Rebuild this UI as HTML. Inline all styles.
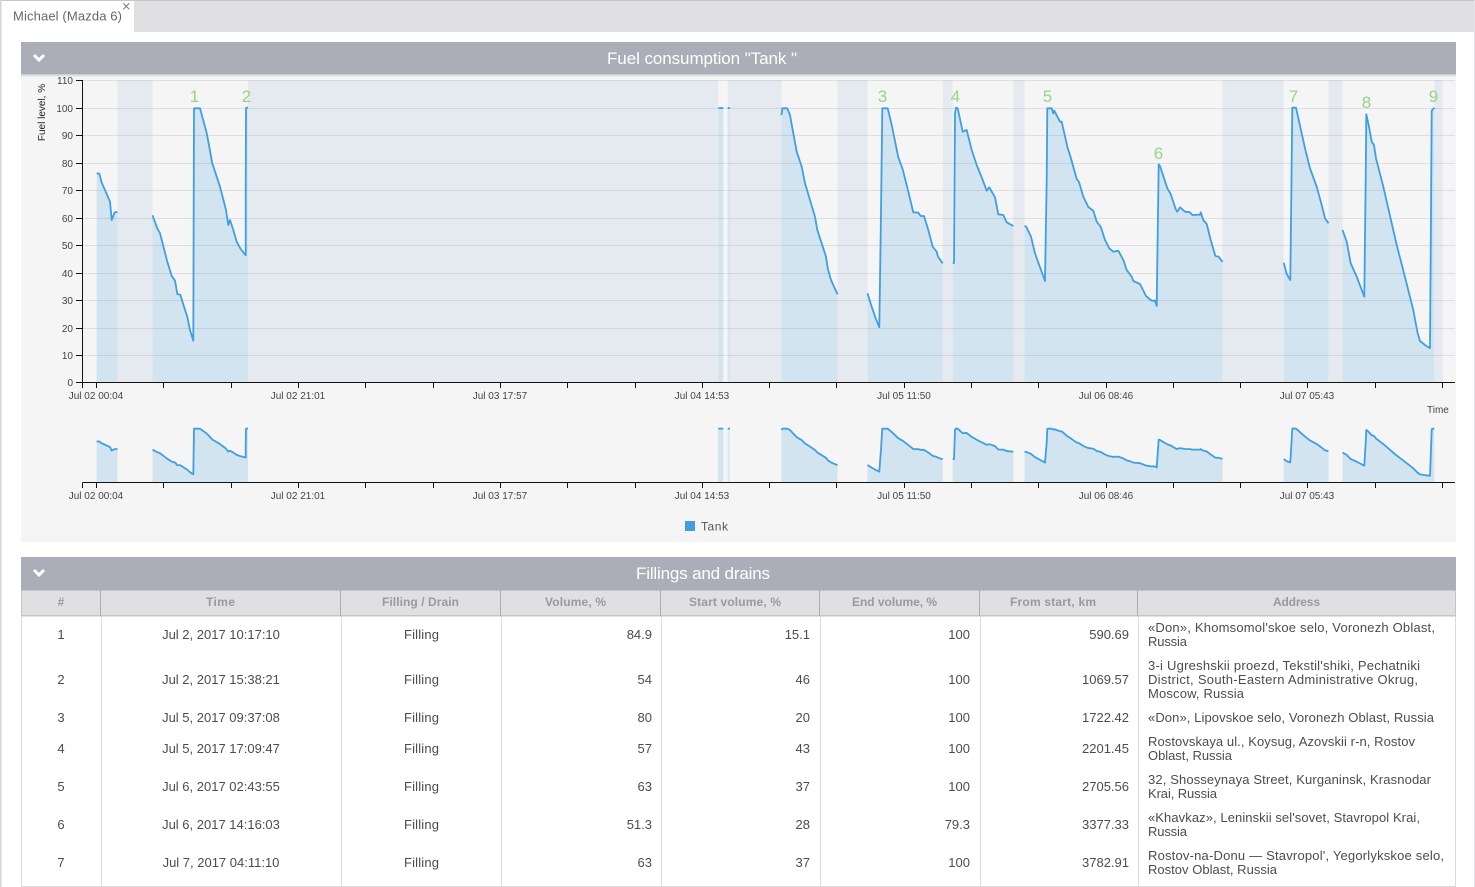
<!DOCTYPE html>
<html><head><meta charset="utf-8"><title>Fuel consumption</title>
<style>
html,body{margin:0;padding:0;background:#fff;width:1475px;height:887px;overflow:hidden}
svg{display:block}
text{font-family:"Liberation Sans",sans-serif}
.tk{font-size:10px;fill:#444;text-anchor:middle}
.yl{font-size:10px;fill:#444;text-anchor:end}
.num{font-size:17px;fill:#95d585;text-anchor:middle}
.th{font-size:12px;font-weight:bold;fill:#979aa3;text-anchor:middle}
.td{font-size:13px;fill:#4c4c4c}
.c{text-anchor:middle}.r{text-anchor:end}
.ttl{font-size:17px;fill:#fff;text-anchor:middle}
.ln{fill:none;stroke:#3f9fe0;stroke-width:1.8;stroke-linejoin:round;vector-effect:non-scaling-stroke}
</style></head><body>
<svg width="1475" height="887" viewBox="0 0 1475 887" xmlns="http://www.w3.org/2000/svg">
<defs>
<linearGradient id="sh" x1="0" y1="0" x2="0" y2="1"><stop offset="0" stop-color="#c4c6cc"/><stop offset="1" stop-color="#f5f5f5"/></linearGradient>
<g id="areas" fill="#d2e4f0">
<polygon points="96.7,173.3 99.3,173.7 101.7,182.7 105,190 110,201.7 111.7,220 114.7,212.3 117.5,212 117.5,382 96.7,382"/>
<polygon points="152.5,215.3 157.3,228.3 160,233.3 167.3,261.7 171.7,276 175,280.7 177.3,294 180.3,294.7 184,306.7 187.3,316.7 190,330 193.3,340.7 194,108.3 200,108.3 206.7,133 212.3,163.3 220,186.7 226,210 228.3,225 230,220 233.3,230 236.7,241.7 240.7,249 245.7,255.3 245.7,200 246,108 248,107.5 248,382 152.5,382"/>
<rect x="718.3" y="108" width="5" height="274"/>
<rect x="727.7" y="108" width="2.3" height="274" opacity=".7"/>
<polygon points="781.5,115 782.3,108.3 787.3,108.3 790,115 793.3,133.3 796.7,151.7 801.7,166.7 805,183.3 810,200 815,216.7 817.3,230 821.7,243.3 826,256.7 827.7,268.3 831,280 837.5,294.3 837.5,382 781.5,382"/>
<polygon points="867.5,293.3 871.7,306.7 875.7,318.3 879.3,327.3 881,213 882.3,108.3 887.7,108.3 891.7,125 898.3,157.3 902.7,169.3 908.3,191.7 913.3,212.3 918.3,212.7 920.7,216 924,216 928.3,230 932.7,246.7 936.7,251.7 938,256.7 942.7,263.3 942.7,382 867.5,382"/>
<polygon points="952.7,263.3 954,263 955,113.3 956,107.7 957.7,108.3 962.7,131.7 966.7,130 971.7,150 976.7,165 982.7,180 986.7,190.7 989.3,187.3 995,197.3 998.3,214.3 1003.3,215 1006.7,222.3 1013.3,226 1013.3,382 952.7,382"/>
<polygon points="1024.5,226 1026.3,226.7 1031,236.7 1035,253.3 1045,281 1046.7,180 1047.3,108.3 1051.7,108.3 1053.3,113.3 1054.3,110.7 1060,121.7 1061.7,121.7 1067.7,148.3 1070,155 1076.7,179 1079,182 1083.3,196.7 1088.3,207 1093.3,210.7 1096.7,221.7 1100.7,226.7 1105,240 1109.3,248.3 1113.3,251.7 1118.3,250.7 1123.3,260 1126.7,270 1131.7,276.7 1133.3,281 1140,284 1146,296 1151.7,300.7 1155,300.7 1156.7,306 1158,213.3 1158.7,164.3 1160,166 1167.3,188.3 1170.7,194 1175.7,209.3 1177.3,211.7 1180,207.3 1185,211.7 1190,212.3 1192.3,215 1200,214.7 1200.7,212.3 1203.3,220 1206.7,224 1210.7,240 1215.3,255.7 1218.7,256.7 1222.5,262 1222.5,382 1024.5,382"/>
<polygon points="1283.7,262.7 1286.7,274 1290.3,280 1291.3,196.7 1292.3,107.7 1296,107.7 1305,148.3 1310,168.3 1316.7,186.7 1321.7,205 1325,218.3 1328.5,223.3 1328.5,382 1283.7,382"/>
<polygon points="1342.5,230 1346.7,241.7 1350.7,263.3 1356.7,276.7 1364.3,296.7 1365.7,180 1366.3,114.3 1369,126.7 1371.7,141.7 1374,145 1376,158.3 1383.3,186.7 1396.7,245 1404,273.3 1413.3,310 1417.3,331.7 1420,341 1425,345 1430,348.3 1431,213 1431.7,110.7 1434.3,107.7 1434.3,382 1342.5,382"/>
</g>
<g id="lines" class="ln">
<polyline class="ln" points="96.7,173.3 99.3,173.7 101.7,182.7 105,190 110,201.7 111.7,220 114.7,212.3 117.5,212"/>
<polyline class="ln" points="152.5,215.3 157.3,228.3 160,233.3 167.3,261.7 171.7,276 175,280.7 177.3,294 180.3,294.7 184,306.7 187.3,316.7 190,330 193.3,340.7 194,108.3 200,108.3 206.7,133 212.3,163.3 220,186.7 226,210 228.3,225 230,220 233.3,230 236.7,241.7 240.7,249 245.7,255.3 245.7,200 246,108 248,107.5"/>
<polyline class="ln" points="718.3,108 723.3,108"/>
<polyline class="ln" points="727.7,108 730,108"/>
<polyline class="ln" points="781.5,115 782.3,108.3 787.3,108.3 790,115 793.3,133.3 796.7,151.7 801.7,166.7 805,183.3 810,200 815,216.7 817.3,230 821.7,243.3 826,256.7 827.7,268.3 831,280 837.5,294.3"/>
<polyline class="ln" points="867.5,293.3 871.7,306.7 875.7,318.3 879.3,327.3 881,213 882.3,108.3 887.7,108.3 891.7,125 898.3,157.3 902.7,169.3 908.3,191.7 913.3,212.3 918.3,212.7 920.7,216 924,216 928.3,230 932.7,246.7 936.7,251.7 938,256.7 942.7,263.3"/>
<polyline class="ln" points="952.7,263.3 954,263 955,113.3 956,107.7 957.7,108.3 962.7,131.7 966.7,130 971.7,150 976.7,165 982.7,180 986.7,190.7 989.3,187.3 995,197.3 998.3,214.3 1003.3,215 1006.7,222.3 1013.3,226"/>
<polyline class="ln" points="1024.5,226 1026.3,226.7 1031,236.7 1035,253.3 1045,281 1046.7,180 1047.3,108.3 1051.7,108.3 1053.3,113.3 1054.3,110.7 1060,121.7 1061.7,121.7 1067.7,148.3 1070,155 1076.7,179 1079,182 1083.3,196.7 1088.3,207 1093.3,210.7 1096.7,221.7 1100.7,226.7 1105,240 1109.3,248.3 1113.3,251.7 1118.3,250.7 1123.3,260 1126.7,270 1131.7,276.7 1133.3,281 1140,284 1146,296 1151.7,300.7 1155,300.7 1156.7,306 1158,213.3 1158.7,164.3 1160,166 1167.3,188.3 1170.7,194 1175.7,209.3 1177.3,211.7 1180,207.3 1185,211.7 1190,212.3 1192.3,215 1200,214.7 1200.7,212.3 1203.3,220 1206.7,224 1210.7,240 1215.3,255.7 1218.7,256.7 1222.5,262"/>
<polyline class="ln" points="1283.7,262.7 1286.7,274 1290.3,280 1291.3,196.7 1292.3,107.7 1296,107.7 1305,148.3 1310,168.3 1316.7,186.7 1321.7,205 1325,218.3 1328.5,223.3"/>
<polyline class="ln" points="1342.5,230 1346.7,241.7 1350.7,263.3 1356.7,276.7 1364.3,296.7 1365.7,180 1366.3,114.3 1369,126.7 1371.7,141.7 1374,145 1376,158.3 1383.3,186.7 1396.7,245 1404,273.3 1413.3,310 1417.3,331.7 1420,341 1425,345 1430,348.3 1431,213 1431.7,110.7 1434.3,107.7"/>
</g>
</defs>

<!-- page chrome -->
<rect width="1475" height="887" fill="#fff"/>
<rect x="134" y="0" width="1341" height="32" fill="#e0e0e2"/>
<rect x="0" y="0" width="1475" height="1" fill="#c6c6c8"/>
<rect x="0" y="0" width="1.5" height="887" fill="#d4d4d6"/>
<rect x="1474" y="0" width="1" height="887" fill="#e4e4e6"/>
<text x="13" y="20.5" font-size="13" fill="#666" textLength="109" lengthAdjust="spacing">Michael (Mazda 6)</text>
<path d="M123.3 3.3l6 6M129.3 3.3l-6 6" stroke="#777" stroke-width="1" fill="none"/>

<!-- chart panel -->
<rect x="21" y="42" width="1435" height="500" fill="#f5f5f5"/>
<rect x="21" y="42" width="1435" height="32" fill="#abaeb8"/>
<rect x="21" y="74" width="1435" height="3" fill="url(#sh)"/>
<polyline points="34,55 39,60 44,55" fill="none" stroke="#fff" stroke-width="3"/>
<text class="ttl" x="702" y="64" textLength="190" lengthAdjust="spacing">Fuel consumption "Tank "</text>

<!-- bands -->
<g fill="#e5eaf1">
<rect x="117.5" y="80" width="35" height="302"/>
<rect x="248" y="80" width="470.3" height="302"/>
<rect x="727.7" y="80" width="54" height="302"/>
<rect x="837.5" y="80" width="30" height="302"/>
<rect x="942.7" y="80" width="10" height="302"/>
<rect x="1013.3" y="80" width="11.2" height="302"/>
<rect x="1222.5" y="80" width="61.2" height="302"/>
<rect x="1328.5" y="80" width="14" height="302"/>
<rect x="1434.3" y="80" width="8.4" height="302"/>
</g>
<use href="#areas"/>
<!-- grid -->
<g stroke="#000" stroke-opacity=".085" stroke-width="1">
<path d="M83 80.5H1455M83 108.5H1455M83 135.5H1455M83 163.5H1455M83 190.5H1455M83 218.5H1455M83 245.5H1455M83 273.5H1455M83 300.5H1455M83 328.5H1455M83 355.5H1455"/>
</g>
<use href="#lines"/>

<!-- axes -->
<g stroke="#111" stroke-width="1" fill="none">
<path d="M82.5 80V388M76 80.5H82.5M76 108.5H82.5M76 135.5H82.5M76 163.5H82.5M76 190.5H82.5M76 218.5H82.5M76 245.5H82.5M76 273.5H82.5M76 300.5H82.5M76 328.5H82.5M76 355.5H82.5M76 382.5H1455"/>
<path id="tk" d="M96.5 382V388M163.5 382V388M231.5 382V388M298.5 382V388M365.5 382V388M433.5 382V388M500.5 382V388M567.5 382V388M635.5 382V388M702.5 382V388M769.5 382V388M836.5 382V388M904.5 382V388M971.5 382V388M1038.5 382V388M1106.5 382V388M1173.5 382V388M1240.5 382V388M1307.5 382V388M1375.5 382V388M1442.5 382V388"/>
</g>
<g class="yl-g">
<text class="yl" x="73" y="84">110</text><text class="yl" x="73" y="112">100</text><text class="yl" x="73" y="139">90</text><text class="yl" x="73" y="167">80</text><text class="yl" x="73" y="194">70</text><text class="yl" x="73" y="222">60</text><text class="yl" x="73" y="249">50</text><text class="yl" x="73" y="277">40</text><text class="yl" x="73" y="304">30</text><text class="yl" x="73" y="332">20</text><text class="yl" x="73" y="359">10</text><text class="yl" x="73" y="386">0</text>
</g>
<text transform="translate(45,112.5) rotate(-90)" font-size="10" fill="#222" text-anchor="middle">Fuel level, %</text>
<g>
<text class="tk" x="96" y="399">Jul 02 00:04</text><text class="tk" x="298" y="399">Jul 02 21:01</text><text class="tk" x="500" y="399">Jul 03 17:57</text><text class="tk" x="702" y="399">Jul 04 14:53</text><text class="tk" x="904" y="399">Jul 05 11:50</text><text class="tk" x="1106" y="399">Jul 06 08:46</text><text class="tk" x="1307" y="399">Jul 07 05:43</text>
</g>
<text x="1427" y="413" font-size="10" fill="#444">Time</text>
<g>
<text class="num" x="194.5" y="102">1</text><text class="num" x="246.5" y="102">2</text><text class="num" x="882.5" y="102">3</text><text class="num" x="955.5" y="102">4</text><text class="num" x="1047.5" y="102">5</text><text class="num" x="1158.5" y="159">6</text><text class="num" x="1293.5" y="102">7</text><text class="num" x="1366.5" y="108">8</text><text class="num" x="1433.5" y="102">9</text>
</g>

<!-- overview chart -->
<g transform="translate(0,407.4) scale(1,0.1964)">
<use href="#areas"/>
<use href="#lines"/>
</g>
<g stroke="#111" stroke-width="1" fill="none">
<path d="M82.5 482.5V488M82.5 482.5H1455"/>
<use href="#tk" y="100"/>
</g>
<g>
<text class="tk" x="96" y="499">Jul 02 00:04</text><text class="tk" x="298" y="499">Jul 02 21:01</text><text class="tk" x="500" y="499">Jul 03 17:57</text><text class="tk" x="702" y="499">Jul 04 14:53</text><text class="tk" x="904" y="499">Jul 05 11:50</text><text class="tk" x="1106" y="499">Jul 06 08:46</text><text class="tk" x="1307" y="499">Jul 07 05:43</text>
</g>
<rect x="685" y="521" width="10" height="10" fill="#3f9fe0"/>
<text x="701" y="530.5" font-size="12" fill="#555" textLength="27" lengthAdjust="spacing">Tank</text>

<!-- table panel -->
<rect x="21" y="557" width="1435" height="33" fill="#abaeb8"/>
<polyline points="34,570 39,575 44,570" fill="none" stroke="#fff" stroke-width="3"/>
<text class="ttl" x="703" y="579" textLength="134" lengthAdjust="spacing">Fillings and drains</text>
<rect x="21" y="590" width="1435" height="26" fill="#e0e0e3"/>
<rect x="21" y="590" width="1435" height="1" fill="#c3c5cc"/>
<rect x="21" y="615" width="1435" height="1.5" fill="#c3c5cd"/>
<path d="M100.5 590V616M340.5 590V616M500.5 590V616M660.5 590V616M819.5 590V616M979.5 590V616M1137.5 590V616" stroke="#a9acb8" fill="none"/>
<path d="M21.5 590V616M1455.5 590V616" stroke="#c3c5cd" fill="none"/>
<path d="M21.5 616V887M101.5 616V887M341.5 616V887M501.5 616V887M661.5 616V887M820.5 616V887M980.5 616V887M1138.5 616V887M1455.5 616V887M21 886.5H1456" stroke="#dcdcdf" fill="none"/>
<g>
<text class="th" x="61" y="606">#</text>
<text class="th" x="220.500" y="606" textLength="29" lengthAdjust="spacing">Time</text>
<text class="th" x="420.500" y="606" textLength="77" lengthAdjust="spacing">Filling / Drain</text>
<text class="th" x="575.500" y="606" textLength="61" lengthAdjust="spacing">Volume, %</text>
<text class="th" x="735" y="606" textLength="92" lengthAdjust="spacing">Start volume, %</text>
<text class="th" x="894.500" y="606" textLength="85" lengthAdjust="spacing">End volume, %</text>
<text class="th" x="1053" y="606" textLength="86" lengthAdjust="spacing">From start, km</text>
<text class="th" x="1296.500" y="606" textLength="47" lengthAdjust="spacing">Address</text>
</g>
<g class="td">
<text class="td c" x="61" y="639">1</text><text class="td c" x="221" y="639">Jul 2, 2017 10:17:10</text><text class="td c" x="421.500" y="639" textLength="35" lengthAdjust="spacing">Filling</text><text class="td r" x="652" y="639">84.9</text><text class="td r" x="810" y="639">15.1</text><text class="td r" x="970" y="639">100</text><text class="td r" x="1129" y="639">590.69</text>
<text class="td c" x="61" y="684">2</text><text class="td c" x="221" y="684">Jul 2, 2017 15:38:21</text><text class="td c" x="421.500" y="684" textLength="35" lengthAdjust="spacing">Filling</text><text class="td r" x="652" y="684">54</text><text class="td r" x="810" y="684">46</text><text class="td r" x="970" y="684">100</text><text class="td r" x="1129" y="684">1069.57</text>
<text class="td c" x="61" y="722">3</text><text class="td c" x="221" y="722">Jul 5, 2017 09:37:08</text><text class="td c" x="421.500" y="722" textLength="35" lengthAdjust="spacing">Filling</text><text class="td r" x="652" y="722">80</text><text class="td r" x="810" y="722">20</text><text class="td r" x="970" y="722">100</text><text class="td r" x="1129" y="722">1722.42</text>
<text class="td c" x="61" y="753">4</text><text class="td c" x="221" y="753">Jul 5, 2017 17:09:47</text><text class="td c" x="421.500" y="753" textLength="35" lengthAdjust="spacing">Filling</text><text class="td r" x="652" y="753">57</text><text class="td r" x="810" y="753">43</text><text class="td r" x="970" y="753">100</text><text class="td r" x="1129" y="753">2201.45</text>
<text class="td c" x="61" y="791">5</text><text class="td c" x="221" y="791">Jul 6, 2017 02:43:55</text><text class="td c" x="421.500" y="791" textLength="35" lengthAdjust="spacing">Filling</text><text class="td r" x="652" y="791">63</text><text class="td r" x="810" y="791">37</text><text class="td r" x="970" y="791">100</text><text class="td r" x="1129" y="791">2705.56</text>
<text class="td c" x="61" y="829">6</text><text class="td c" x="221" y="829">Jul 6, 2017 14:16:03</text><text class="td c" x="421.500" y="829" textLength="35" lengthAdjust="spacing">Filling</text><text class="td r" x="652" y="829">51.3</text><text class="td r" x="810" y="829">28</text><text class="td r" x="970" y="829">79.3</text><text class="td r" x="1129" y="829">3377.33</text>
<text class="td c" x="61" y="867">7</text><text class="td c" x="221" y="867">Jul 7, 2017 04:11:10</text><text class="td c" x="421.500" y="867" textLength="35" lengthAdjust="spacing">Filling</text><text class="td r" x="652" y="867">63</text><text class="td r" x="810" y="867">37</text><text class="td r" x="970" y="867">100</text><text class="td r" x="1129" y="867">3782.91</text>

<text class="td" x="1148" y="632" textLength="287" lengthAdjust="spacing">«Don», Khomsomol'skoe selo, Voronezh Oblast,</text>
<text class="td" x="1148" y="646" textLength="39" lengthAdjust="spacing">Russia</text>
<text class="td" x="1148" y="670" textLength="272" lengthAdjust="spacing">3-i Ugreshskii proezd, Tekstil'shiki, Pechatniki</text>
<text class="td" x="1148" y="684" textLength="270" lengthAdjust="spacing">District, South-Eastern Administrative Okrug,</text>
<text class="td" x="1148" y="698" textLength="96" lengthAdjust="spacing">Moscow, Russia</text>
<text class="td" x="1148" y="722" textLength="286" lengthAdjust="spacing">«Don», Lipovskoe selo, Voronezh Oblast, Russia</text>
<text class="td" x="1148" y="746" textLength="267" lengthAdjust="spacing">Rostovskaya ul., Koysug, Azovskii r-n, Rostov</text>
<text class="td" x="1148" y="760" textLength="84" lengthAdjust="spacing">Oblast, Russia</text>
<text class="td" x="1148" y="784" textLength="283" lengthAdjust="spacing">32, Shosseynaya Street, Kurganinsk, Krasnodar</text>
<text class="td" x="1148" y="798" textLength="69" lengthAdjust="spacing">Krai, Russia</text>
<text class="td" x="1148" y="822" textLength="272" lengthAdjust="spacing">«Khavkaz», Leninskii sel'sovet, Stavropol Krai,</text>
<text class="td" x="1148" y="836" textLength="39" lengthAdjust="spacing">Russia</text>
<text class="td" x="1148" y="860" textLength="296" lengthAdjust="spacing">Rostov-na-Donu — Stavropol', Yegorlykskoe selo,</text>
<text class="td" x="1148" y="874" textLength="129" lengthAdjust="spacing">Rostov Oblast, Russia</text>
</g>
</svg>
</body></html>
